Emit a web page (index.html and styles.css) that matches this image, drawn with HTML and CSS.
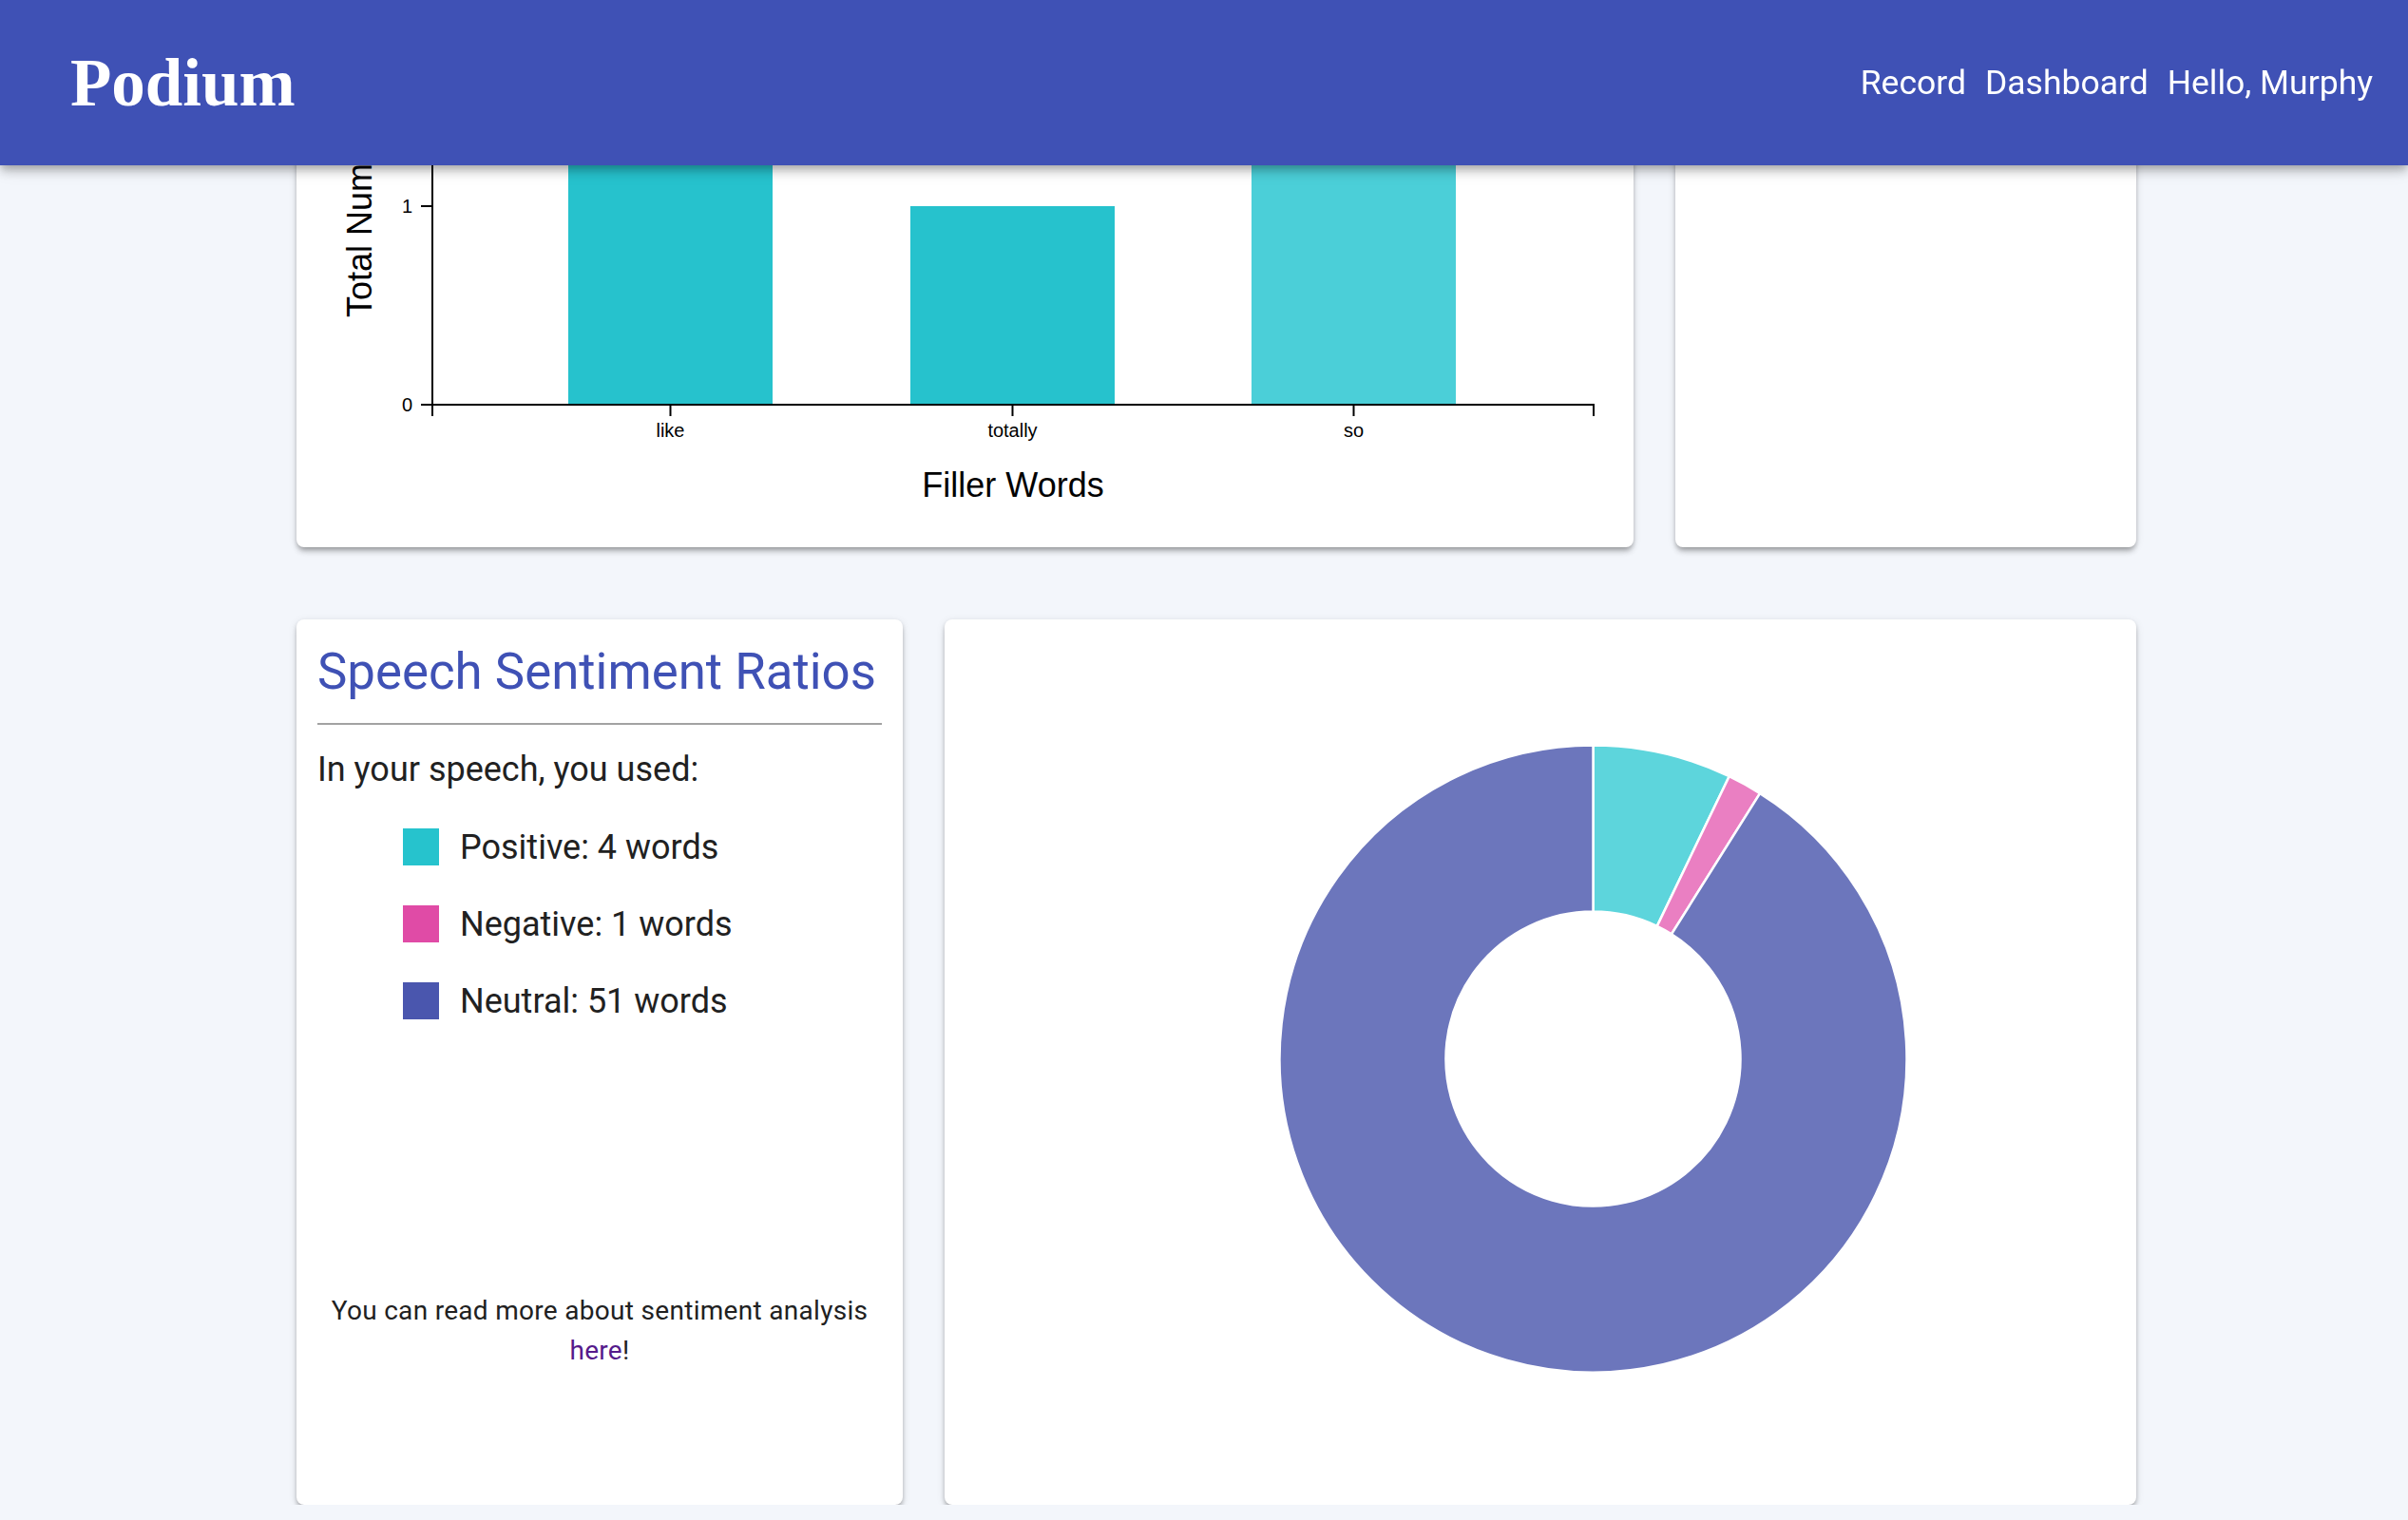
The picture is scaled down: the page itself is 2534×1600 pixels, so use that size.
FILE: index.html
```html
<!DOCTYPE html>
<html lang="en">
<head>
<meta charset="utf-8">
<title>Podium</title>
<link rel="stylesheet" href="styles.css">
</head>
<body>
<header class="appbar">
  <div class="logo">Podium</div>
  <nav class="nav">
    <a class="nav-link" href="#">Record</a>
    <a class="nav-link" href="#">Dashboard</a>
    <a class="nav-link" href="#">Hello, Murphy</a>
  </nav>
</header>

<main class="main">
  <section class="row row-top">
    <div class="card chart-card">
      <svg class="bar-chart" width="1407" height="500" viewBox="0 0 1407 500">
        <g class="bars">
          <rect x="286" y="0" width="215" height="350" fill="#26c2cd"/>
          <rect x="646" y="141" width="215" height="209" fill="#26c2cd"/>
          <rect x="1005" y="0" width="215" height="350" fill="#4bcfd8"/>
        </g>
        <g class="axis" stroke="#000" fill="none">
          <path d="M143,362V350H1365V362" stroke-width="2"/>
          <line x1="393.5" y1="350" x2="393.5" y2="362" stroke-width="2"/>
          <line x1="753.5" y1="350" x2="753.5" y2="362" stroke-width="2"/>
          <line x1="1112.5" y1="350" x2="1112.5" y2="362" stroke-width="2"/>
          <path d="M131,0H143V350H131" stroke-width="2"/>
          <line x1="131" y1="141" x2="143" y2="141" stroke-width="2"/>
        </g>
        <g class="tick-labels">
          <text x="393.5" y="384" text-anchor="middle">like</text>
          <text x="753.5" y="384" text-anchor="middle">totally</text>
          <text x="1112.5" y="384" text-anchor="middle">so</text>
          <text x="122" y="148" text-anchor="end">1</text>
          <text x="122" y="357" text-anchor="end">0</text>
        </g>
        <text class="axis-title" x="754" y="447" text-anchor="middle">Filler Words</text>
        <text class="axis-title" transform="translate(79,258) rotate(-90)">Total Number of Uses</text>
      </svg>
    </div>
    <div class="card side-card"></div>
  </section>

  <section class="row row-bottom">
    <div class="card sentiment-card">
      <h2 class="card-title">Speech Sentiment Ratios</h2>
      <hr class="divider">
      <p class="lead">In your speech, you used:</p>
      <ul class="legend">
        <li class="legend-item"><span class="swatch swatch-positive"></span><span>Positive: 4 words</span></li>
        <li class="legend-item"><span class="swatch swatch-negative"></span><span>Negative: 1 words</span></li>
        <li class="legend-item"><span class="swatch swatch-neutral"></span><span>Neutral: 51 words</span></li>
      </ul>
      <p class="note">You can read more about sentiment analysis <a class="note-link" href="#">here</a>!</p>
    </div>
    <div class="card donut-card">
      <svg class="donut" width="1254" height="932" viewBox="0 0 1254 932">
        <g transform="translate(682.5,462.5)" stroke="#fff" stroke-width="2.5">
          <path fill="#5dd5dc" d="M0,-330A330,330 0 0 1 143.18,-297.32L67.25,-139.65A155,155 0 0 0 0,-155Z"/>
          <path fill="#ea7fc2" d="M143.18,-297.32A330,330 0 0 1 175.57,-279.42L82.46,-131.24A155,155 0 0 0 67.25,-139.65Z"/>
          <path fill="#6c76bc" d="M175.57,-279.42A330,330 0 1 1 0,-330L0,-155A155,155 0 1 0 82.46,-131.24Z"/>
        </g>
      </svg>
    </div>
  </section>
</main>
</body>
</html>
```

FILE: styles.css
```css
html, body {
  margin: 0;
  padding: 0;
  overflow: hidden;
}

body {
  background: #f3f6fb;
  font-family: Roboto, "Liberation Sans", Arial, sans-serif;
  color: #212121;
}

.appbar {
  position: fixed;
  top: 0;
  left: 0;
  right: 0;
  height: 174px;
  z-index: 10;
  display: flex;
  align-items: center;
  justify-content: space-between;
  padding: 0 37px 0 74px;
  background: #3f51b5;
  box-shadow: 0 4px 8px -2px rgba(0,0,0,0.2), 0 8px 10px 0 rgba(0,0,0,0.14), 0 2px 20px 0 rgba(0,0,0,0.12);
}

.logo {
  font-family: "Liberation Serif", "Times New Roman", serif;
  font-weight: bold;
  font-size: 71px;
  color: #fff;
}

.nav {
  display: flex;
  gap: 20px;
}

.nav-link {
  font-family: Roboto, sans-serif;
  font-size: 35.5px;
  color: #fff;
  text-decoration: none;
}

.main {
  padding: 76px 0 0 312px;
  width: 1936px;
}

.row {
  display: grid;
  column-gap: 44px;
}

.row-top {
  grid-template-columns: 1407px 485px;
  height: 500px;
}

.row-bottom {
  grid-template-columns: 638px 1254px;
  height: 932px;
  margin-top: 76px;
}

.card {
  background: #fff;
  border-radius: 8px;
  box-shadow: 0 6px 6px -2px rgba(0,0,0,0.24), 0 2px 4px 0 rgba(0,0,0,0.12), 0 2px 10px 0 rgba(0,0,0,0.10);
  overflow: hidden;
}

.bar-chart {
  display: block;
}

.tick-labels text {
  font-family: "Liberation Sans", Arial, sans-serif;
  font-size: 20px;
  fill: #000;
}

.axis-title {
  font-family: "Liberation Sans", Arial, sans-serif;
  font-size: 36px;
  fill: #000;
}

.sentiment-card {
  padding: 24px 22px 0 22px;
  box-sizing: border-box;
}

.card-title {
  margin: 0;
  font-family: Roboto, sans-serif;
  font-weight: 400;
  font-size: 52.8px;
  line-height: 63px;
  color: #3f51b5;
  white-space: nowrap;
}

.divider {
  margin: 22px 0 0 0;
  border: none;
  height: 2px;
  background: #a2a2a2;
}

.lead {
  margin: 20px 0 0 0;
  font-size: 36px;
  line-height: 54px;
}

.legend {
  list-style: none;
  margin: 14px 0 0 0;
  padding: 0 0 0 90px;
}

.legend-item {
  display: flex;
  align-items: center;
  height: 81px;
  font-size: 36px;
  line-height: 54px;
}

.swatch {
  width: 38px;
  height: 39px;
  margin-right: 22px;
  flex: none;
}

.swatch-positive { background: #26c3cd; }
.swatch-negative { background: #e04ba6; }
.swatch-neutral { background: #4a56ae; }

.note {
  margin: 265px 0 0 0;
  text-align: center;
  font-size: 28px;
  line-height: 42px;
  letter-spacing: 0.3px;
}

.note-link {
  color: #551a8b;
  text-decoration: none;
}

.donut {
  display: block;
}
```
